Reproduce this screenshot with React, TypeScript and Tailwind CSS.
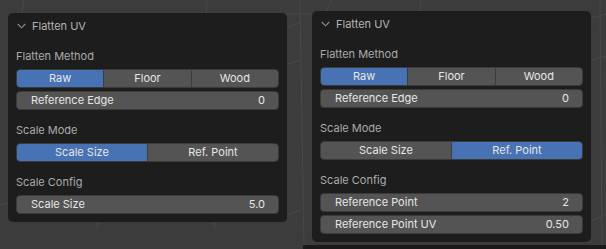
import React from "react";

const font = { fontFamily: "Inter, 'Noto Sans', sans-serif" };

function Chevron() {
  return (
    <svg width="9" height="6" viewBox="0 0 9 6" className="shrink-0">
      <path d="M0.8 1 L4.5 4.8 L8.2 1" fill="none" stroke="#8e8e8e" strokeWidth="1.1" />
    </svg>
  );
}

function Segmented({ items, active }: { items: string[]; active: number }) {
  return (
    <div className="flex h-[19px] rounded-[4px] overflow-hidden border border-[#3a3a3a]">
      {items.map((it, i) => (
        <div
          key={it}
          className={
            "flex-1 flex items-center justify-center text-[11px] text-[#e6e6e6] " +
            (i === active ? "bg-[#4772b3] " : "bg-[#545454] ") +
            (i > 0 ? "border-l border-[#3d3d3d]" : "")
          }
        >
          {it}
        </div>
      ))}
    </div>
  );
}

function Field({ label, value }: { label: string; value: string }) {
  return (
    <div className="flex h-[19px] items-center justify-between rounded-[4px] bg-[#545454] border border-[#3a3a3a] pl-[14px] pr-[13px] text-[11px] text-[#e6e6e6]">
      <span>{label}</span>
      <span>{value}</span>
    </div>
  );
}

function Label({ children }: { children: React.ReactNode }) {
  return <div className="h-5 flex items-center text-[11px] text-[#ababab]">{children}</div>;
}

function Panel({ right, className }: { right: boolean; className: string }) {
  return (
    <div className={"w-[279px] rounded-[5px] bg-[#1d1d1d] " + className} style={font}>
      <div className="h-[26px] flex items-center gap-[6px] pl-[9px]">
        <Chevron />
        <span className="text-[11px] text-[#b4b4b4]">Flatten UV</span>
      </div>
      <div className="px-[8px] pt-[7px] pb-[8px] flex flex-col">
        <Label>Flatten Method</Label>
        <div className="mt-[3px] flex flex-col gap-[3px]">
          <Segmented items={["Raw", "Floor", "Wood"]} active={0} />
          <Field label="Reference Edge" value="0" />
        </div>
        <div className="mt-[10px]">
          <Label>Scale Mode</Label>
        </div>
        <div className="mt-[3px]">
          <Segmented items={["Scale Size", "Ref. Point"]} active={right ? 1 : 0} />
        </div>
        <div className="mt-[10px]">
          <Label>Scale Config</Label>
        </div>
        <div className="mt-[3px] flex flex-col gap-[3px]">
          {right ? (
            <>
              <Field label="Reference Point" value="2" />
              <Field label="Reference Point UV" value="0.50" />
            </>
          ) : (
            <Field label="Scale Size" value="5.0" />
          )}
        </div>
      </div>
    </div>
  );
}

export default function App() {
  return (
    <div className="relative w-[606px] h-[249px] overflow-hidden bg-[#3c3c3c]">
      <svg className="absolute inset-0" width="606" height="249" viewBox="0 0 606 249">
        <g stroke="#494949" strokeWidth="1" fill="none">
          <line x1="24" y1="0" x2="14" y2="60" />
          <line x1="207" y1="0" x2="206" y2="20" />
          <line x1="287" y1="28" x2="300" y2="22" />
          <line x1="287" y1="64" x2="300" y2="60" />
          <line x1="0" y1="205" x2="8" y2="203" />
          <line x1="97" y1="222" x2="97" y2="230" />
          <line x1="215" y1="222" x2="215" y2="230" />
          <line x1="287" y1="215" x2="300" y2="210" />
          <line x1="300" y1="0" x2="304" y2="249" />
          <line x1="286" y1="14" x2="312" y2="14" />
          <line x1="332" y1="0" x2="326" y2="11" />
          <line x1="421" y1="0" x2="420" y2="11" />
          <line x1="591" y1="18" x2="606" y2="14" />
          <line x1="591" y1="60" x2="606" y2="56" />
          <line x1="591" y1="221" x2="606" y2="214" />
          <line x1="600" y1="0" x2="602" y2="249" />
        </g>
        <rect x="303" y="245" width="303" height="4" fill="#1a1a1a" />
      </svg>
      <div className="relative flex items-start pl-[8px] gap-[25px]">
        <Panel right={false} className="mt-[13px]" />
        <Panel right={true} className="mt-[11px]" />
      </div>
    </div>
  );
}
